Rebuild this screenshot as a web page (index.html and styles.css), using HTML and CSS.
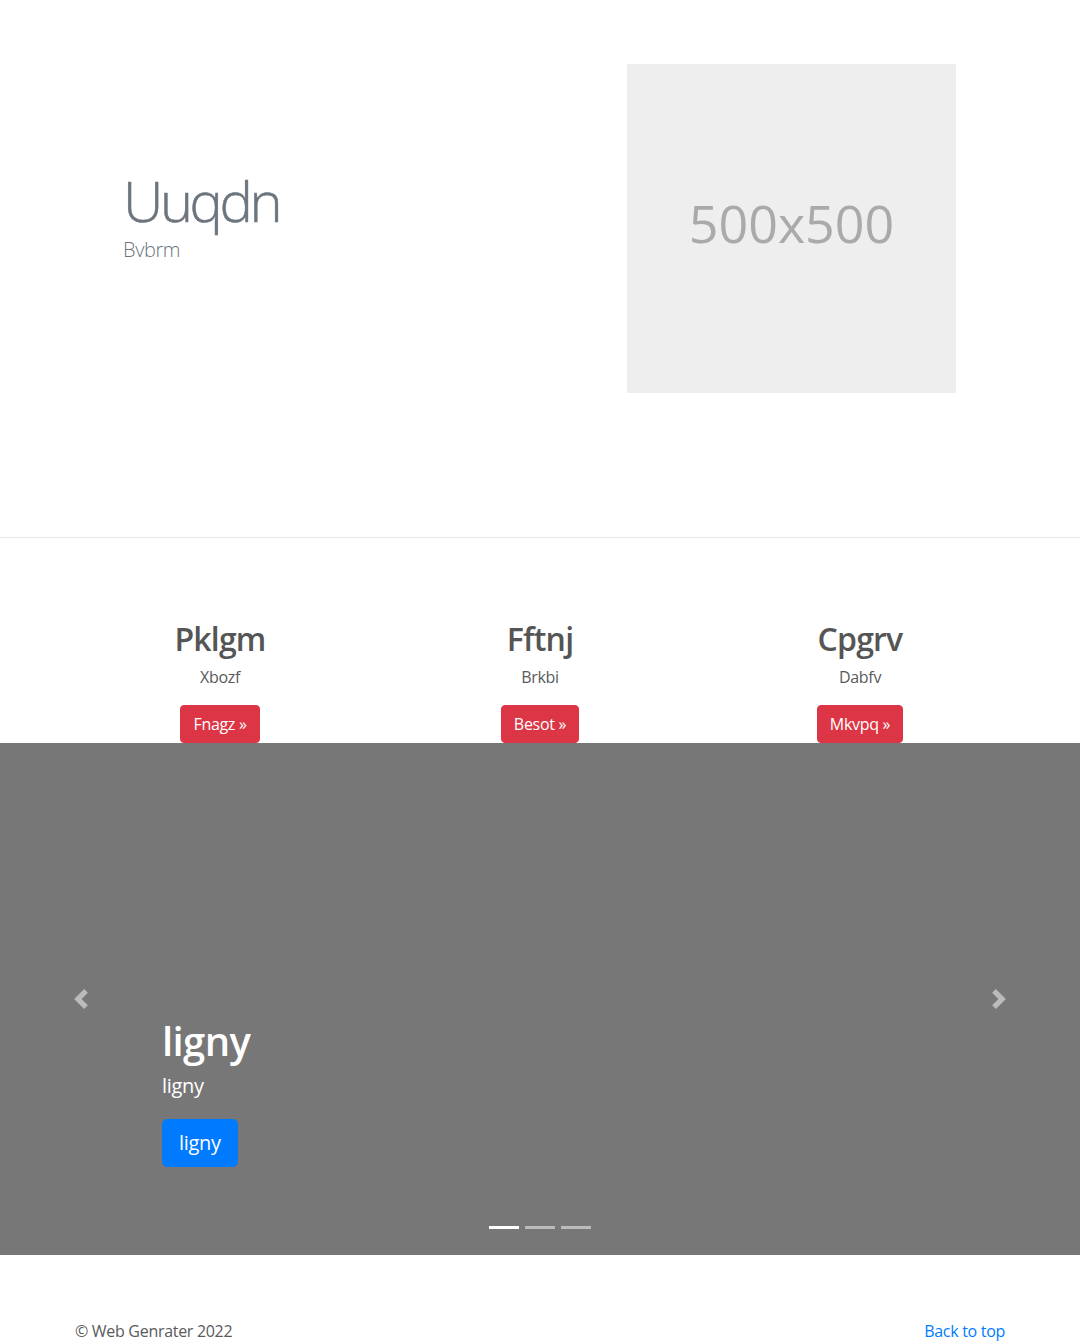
FILE: index.html
```html
<!DOCTYPE html>
<html lang="en">
<head>
<meta charset="utf-8">
<title>Web Genrater</title>
<link rel="stylesheet" href="styles.css">
</head>
<body>
<section class="hero">
  <div class="container hero-row">
    <div class="hero-text">
      <h1 class="display">Uuqdn</h1>
      <p class="lead">Bvbrm</p>
    </div>
    <div class="hero-media">
      <div class="placeholder">500x500</div>
    </div>
  </div>
</section>

<section class="features">
  <div class="feature-row">
    <div class="feature">
      <h2>Pklgm</h2>
      <p>Xbozf</p>
      <div class="actions"><a class="btn btn-danger" href="#">Fnagz &raquo;</a></div>
    </div>
    <div class="feature">
      <h2>Fftnj</h2>
      <p>Brkbi</p>
      <div class="actions"><a class="btn btn-danger" href="#">Besot &raquo;</a></div>
    </div>
    <div class="feature">
      <h2>Cpgrv</h2>
      <p>Dabfv</p>
      <div class="actions"><a class="btn btn-danger" href="#">Mkvpq &raquo;</a></div>
    </div>
  </div>
</section>

<section class="carousel">
  <a class="carousel-control prev" href="#" aria-label="Previous">
    <svg width="20" height="20" viewBox="0 0 8 8"><path fill="#fff" d="M5.25 0l-4 4 4 4 1.5-1.5L4.25 4l2.5-2.5L5.25 0z"/></svg>
  </a>
  <div class="carousel-caption">
    <h1>ligny</h1>
    <p>ligny</p>
    <div class="actions"><a class="btn btn-lg btn-primary" href="#">ligny</a></div>
  </div>
  <a class="carousel-control next" href="#" aria-label="Next">
    <svg width="20" height="20" viewBox="0 0 8 8"><path fill="#fff" d="M2.75 0l-1.5 1.5L3.75 4l-2.5 2.5L2.75 8l4-4-4-4z"/></svg>
  </a>
  <ol class="carousel-indicators">
    <li class="active"></li>
    <li></li>
    <li></li>
  </ol>
</section>

<footer class="container footer">
  <p>&copy; Web Genrater 2022</p>
  <p><a href="#">Back to top</a></p>
</footer>
</body>
</html>
```
FILE: styles.css
```css
* { box-sizing: border-box; }

body {
  margin: 0;
  font-family: "Open Sans", "Noto Sans", "Liberation Sans", sans-serif;
  font-size: 16px;
  line-height: 1.5;
  color: #5a5a5a;
  background: #fff;
}

a { color: #007bff; text-decoration: none; }

p { margin: 0 0 16px; }

.container {
  width: 930px;
  margin: 0 auto;
}

/* hero */
.hero {
  border-bottom: 1px solid #e6e6e6;
  padding: 64px 0 144px;
}

.hero-row {
  display: flex;
  align-items: flex-start;
}

.hero-text {
  flex: 1;
  padding: 106px 0 0 48px;
  color: #6c757d;
}

.display {
  margin: 0;
  font-size: 56px;
  font-weight: 300;
  line-height: 1.1;
  letter-spacing: -3.4px;
  -webkit-text-stroke: 0.5px #6c757d;
}

.lead {
  margin: 3px 0 0;
  font-size: 20px;
  font-weight: 300;
  line-height: 1.5;
  letter-spacing: -0.4px;
}

.hero-media {
  display: flex;
  justify-content: flex-end;
  padding-right: 49px;
}

.placeholder {
  width: 329px;
  height: 329px;
  background: #eeeeee;
  color: #aaaaaa;
  display: flex;
  align-items: center;
  justify-content: center;
  font-size: 52px;
  line-height: 1;
  padding-bottom: 12px;
}

/* features */
.features {
  padding-top: 82px;
}

.feature-row {
  width: 960px;
  margin: 0 auto;
  display: grid;
  grid-template-columns: repeat(3, 1fr);
}

.feature {
  text-align: center;
  padding: 0 15px;
}

.feature h2 {
  margin: 0 0 7px;
  font-size: 32px;
  font-weight: 600;
  line-height: 1.2;
  letter-spacing: -0.8px;
  color: #555;
}

.feature p {
  margin-bottom: 16px;
  letter-spacing: -0.3px;
}

.actions {
  display: flex;
}

.feature .actions { justify-content: center; }

.btn {
  display: inline-block;
  border: 1px solid transparent;
  border-radius: 4px;
  padding: 6px 12px;
  font-size: 16px;
  line-height: 24px;
  color: #fff;
  letter-spacing: -0.3px;
}

.btn-danger {
  background: #dc3545;
  border-color: #dc3545;
}

.btn-primary {
  background: #007bff;
  border-color: #007bff;
}

.btn-lg {
  padding: 8px 16px;
  font-size: 20px;
  line-height: 30px;
  border-radius: 5px;
}

/* carousel */
.carousel {
  position: relative;
  height: 512px;
  background: #777777;
  margin-bottom: 64px;
}

.carousel-control {
  position: absolute;
  top: 0;
  bottom: 0;
  width: 15%;
  display: flex;
  align-items: center;
  justify-content: center;
  opacity: 0.5;
}

.carousel-control.prev { left: 0; }
.carousel-control.next { right: 0; }

.carousel-caption {
  position: absolute;
  left: 15%;
  right: 15%;
  bottom: 48px;
  padding-bottom: 24px;
  color: #fff;
  text-align: left;
}

.carousel-caption h1 {
  margin: 0 0 6px;
  font-size: 40px;
  font-weight: 600;
  line-height: 1.2;
  letter-spacing: -0.6px;
}

.carousel-caption p {
  margin-bottom: 18px;
  font-size: 20px;
  line-height: 1.5;
  letter-spacing: -0.3px;
}

.carousel-caption .actions { margin-bottom: 16px; }

.carousel-indicators {
  position: absolute;
  left: 0;
  right: 0;
  bottom: 0;
  margin: 0 0 16px;
  padding: 0;
  list-style: none;
  display: flex;
  justify-content: center;
}

.carousel-indicators li {
  width: 30px;
  height: 3px;
  margin: 10px 3px;
  background: #fff;
  opacity: 0.5;
}

.carousel-indicators li.active { opacity: 1; }

/* footer */
.footer {
  display: flex;
  justify-content: space-between;
  letter-spacing: -0.3px;
}
```
